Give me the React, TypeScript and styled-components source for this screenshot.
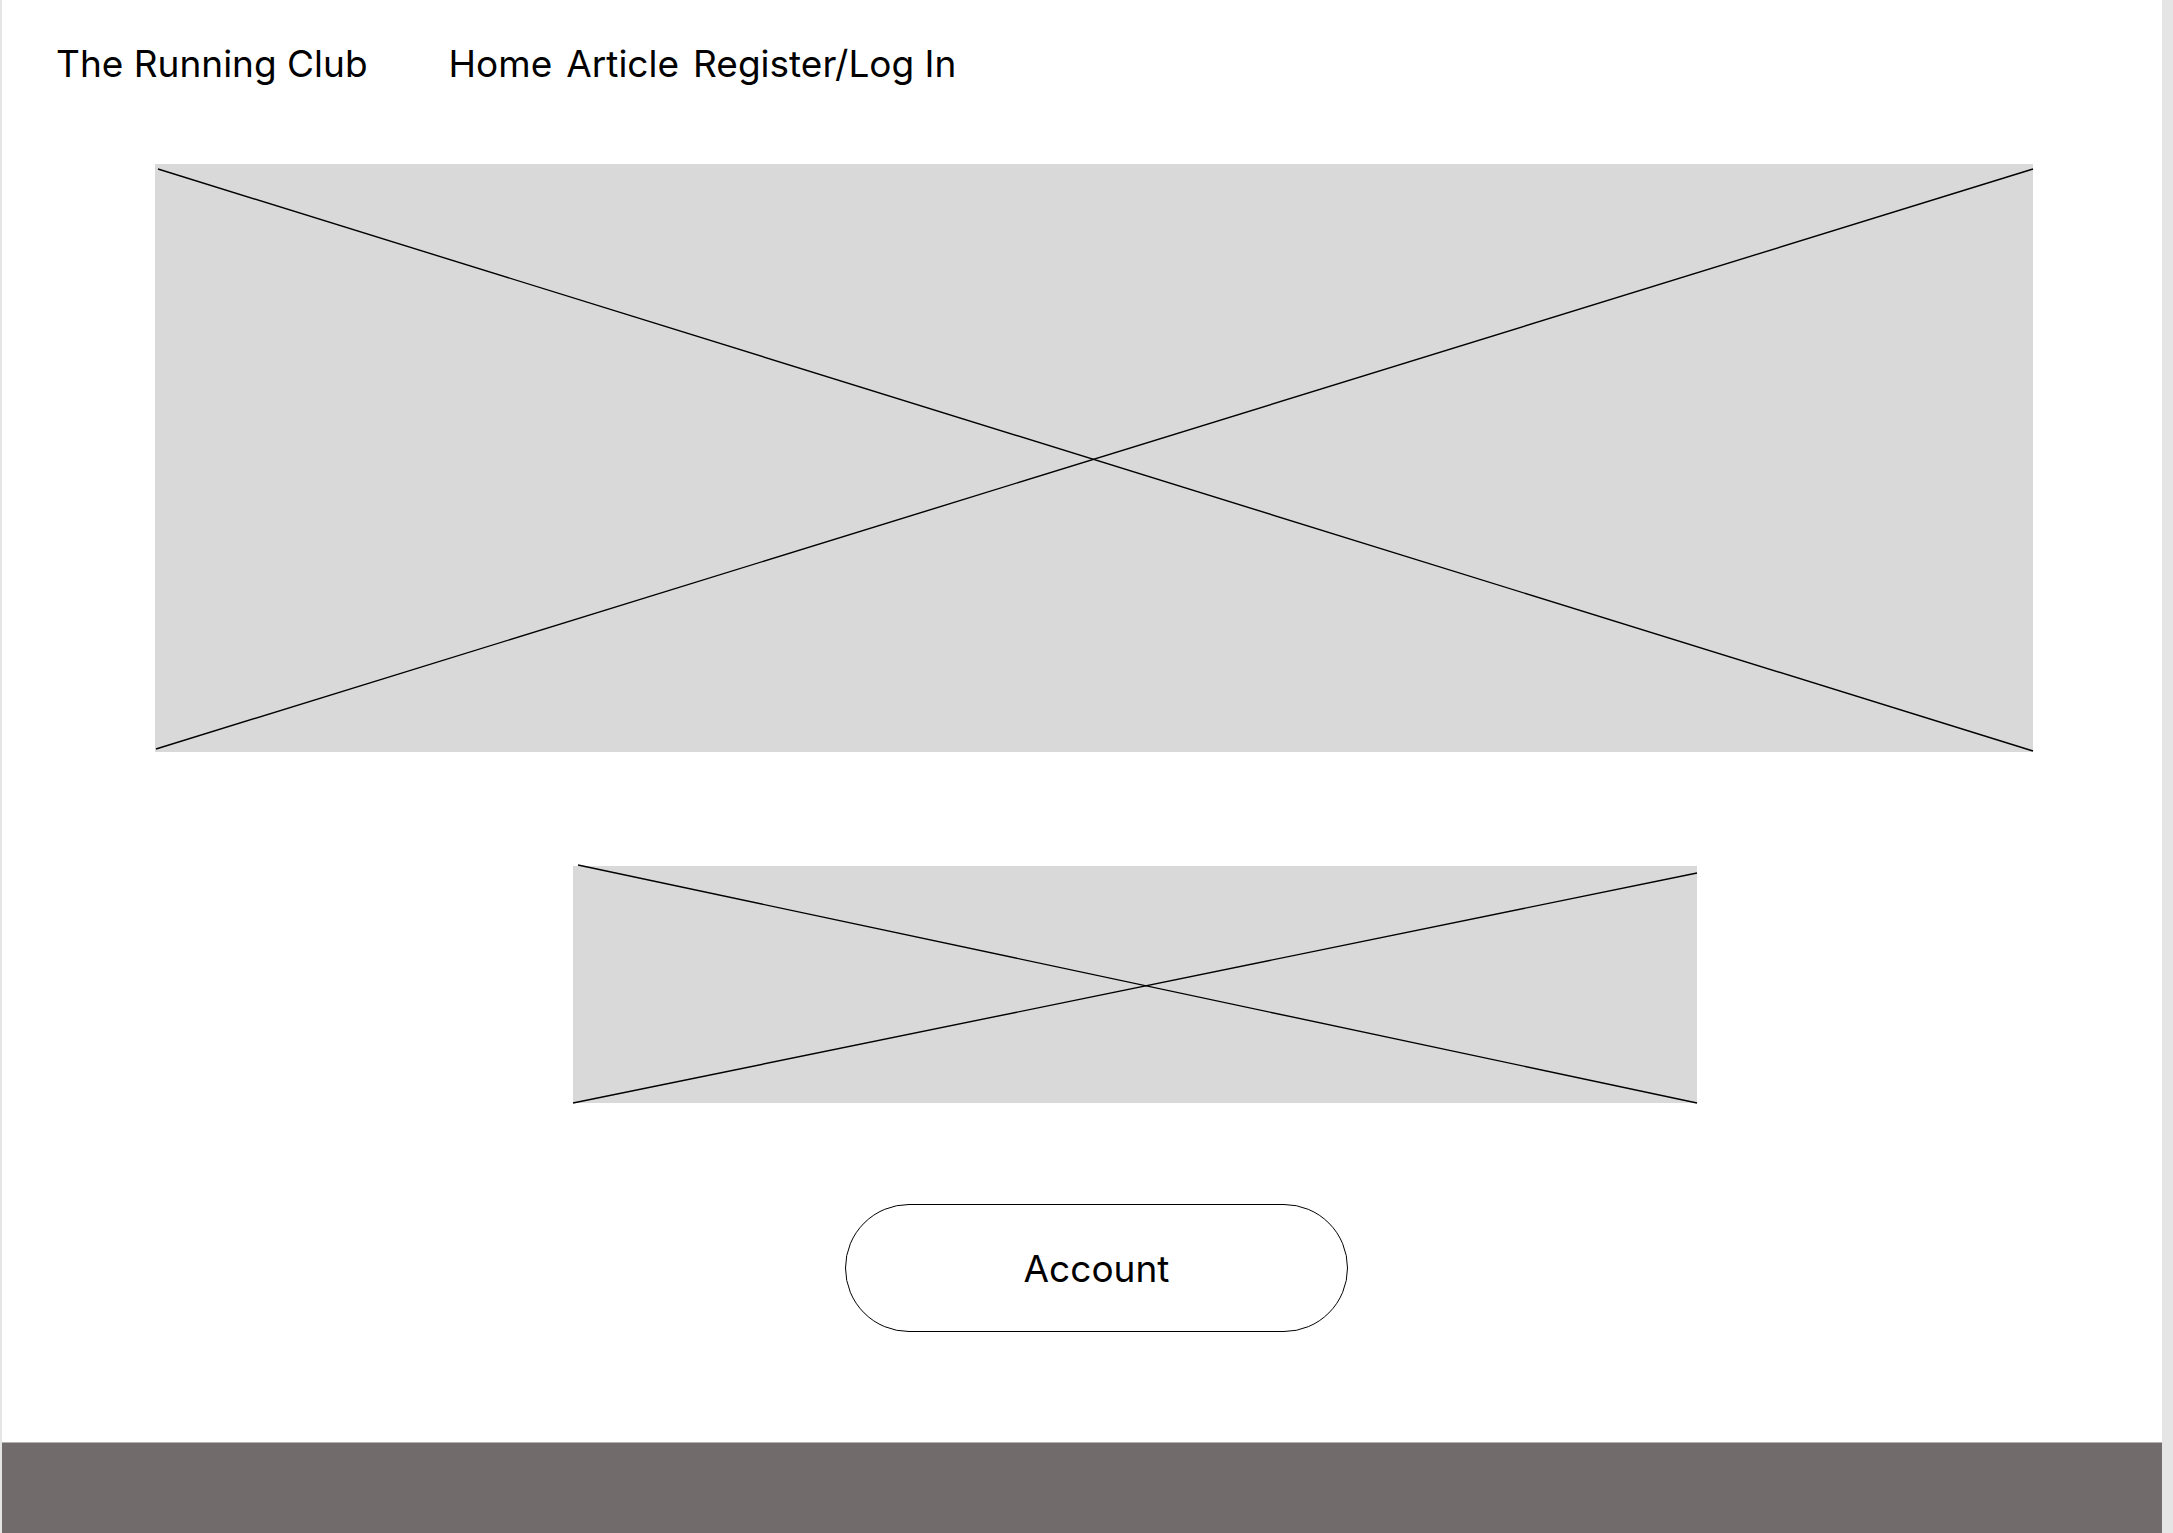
import * as React from "react"
import styled, { createGlobalStyle } from "styled-components"

const GlobalStyle = createGlobalStyle`
  html, body {
    margin: 0;
    padding: 0;
    background: #e5e5e5;
    font-family: Inter, "Noto Sans", "Liberation Sans", sans-serif;
    color: #000;
  }
`

const Frame = styled.div`
  margin-left: 2px;
  width: 2160px;
  min-height: 1533px;
  background: #fff;
  display: flex;
  flex-direction: column;
`

const Header = styled.header`
  display: flex;
  align-items: flex-start;
  gap: 81px;
  padding: 41px 0 0 54px;
  height: 122px;
  box-sizing: border-box;
  font-size: 37px;
  line-height: normal;
  .brand {
    white-space: nowrap;
  }
  nav {
    display: flex;
    gap: 14px;
    white-space: nowrap;
  }
`

const Main = styled.main`
  display: flex;
  flex-direction: column;
  align-items: flex-start;
`

const Placeholder = styled.div<{ $left: number; $top: number; $w: number; $h: number }>`
  position: relative;
  margin-left: ${p => p.$left}px;
  margin-top: ${p => p.$top}px;
  width: ${p => p.$w}px;
  height: ${p => p.$h}px;
  background: #d9d9d9;
  svg {
    position: absolute;
    inset: 0;
    overflow: visible;
  }
`

const AccountButton = styled.button`
  margin: 101px 0 0 843px;
  width: 503px;
  height: 128px;
  border: 1.3px solid #000;
  border-radius: 64px;
  background: #fff;
  font-family: Inter, "Noto Sans", "Liberation Sans", sans-serif;
  font-size: 37px;
  color: #000;
  padding: 0;
  cursor: pointer;
`

const Footer = styled.footer`
  margin-top: auto;
  height: 90px;
  background: #716c6b;
  border-top: 1px solid #b3b0af;
`

type Line = [number, number, number, number]

const Cross = ({ w, h, lines }: { w: number; h: number; lines: Line[] }) => (
  <svg width={w} height={h} viewBox={`0 0 ${w} ${h}`}>
    {lines.map(([x1, y1, x2, y2], i) => (
      <line key={i} x1={x1} y1={y1} x2={x2} y2={y2} stroke="#000" strokeWidth={1.4} />
    ))}
  </svg>
)

export default function App() {
  return (
    <>
      <GlobalStyle />
      <Frame>
        <Header>
          <div className="brand">The Running Club</div>
          <nav>
            <span>Home</span>
            <span>Article</span>
            <span>Register/Log In</span>
          </nav>
        </Header>
        <Main>
          <Placeholder $left={153} $top={42} $w={1878} $h={588}>
            <Cross
              w={1878}
              h={588}
              lines={[
                [3, 5, 1878, 587],
                [1, 585, 1878, 5]
              ]}
            />
          </Placeholder>
          <Placeholder $left={571} $top={114} $w={1124} $h={237}>
            <Cross
              w={1124}
              h={237}
              lines={[
                [5, -1, 1124, 237],
                [0, 237, 1124, 7]
              ]}
            />
          </Placeholder>
          <AccountButton>Account</AccountButton>
        </Main>
        <Footer />
      </Frame>
    </>
  )
}
